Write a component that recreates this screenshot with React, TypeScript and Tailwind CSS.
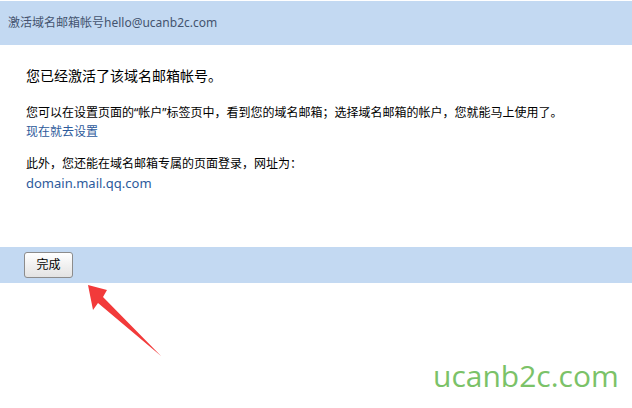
import React from "react";

const font = { fontFamily: "'Noto Sans', 'Noto Sans CJK SC', sans-serif" };

export default function App() {
  return (
    <div className="relative w-[632px] h-[408px] bg-white overflow-hidden" style={font}>
      {/* Header */}
      <div className="mt-px h-[44px] bg-[#c3d9f2] flex items-center pl-[8px] text-[12px] text-[#44546f]">
        激活域名邮箱帐号hello@ucanb2c.com
      </div>

      {/* Body */}
      <div className="pl-[26px] pt-[21px] h-[202px] text-black">
        <p className="text-[14px] leading-[20px]">您已经激活了该域名邮箱帐号。</p>
        <p className="mt-[17px] text-[12px] leading-[19px]">
          您可以在设置页面的“帐户”标签页中，看到您的域名邮箱；选择域名邮箱的帐户，您就能马上使用了。
        </p>
        <p className="text-[12px] leading-[19px] text-[#2d5a9b]">现在就去设置</p>
        <p className="mt-[14px] text-[12px] leading-[18px]">此外，您还能在域名邮箱专属的页面登录，网址为：</p>
        <p className="text-[13px] leading-[20px] text-[#2d5a9b]">domain.mail.qq.com</p>
      </div>

      {/* Footer bar */}
      <div className="h-[36px] bg-[#c3d9f2] flex items-center pl-[24px]">
        <button className="w-[49px] h-[26px] rounded-[3px] border border-[#8c8c8c] bg-gradient-to-b from-white to-[#e3e3e3] text-[12px] text-black">
          完成
        </button>
      </div>

      {/* Red annotation arrow */}
      <svg className="absolute left-0 top-0" width="632" height="408">
        <polygon
          points="88,285 107,290 103,297 161,356 98,303 93,310"
          fill="#f23a3a"
        />
      </svg>

      {/* Watermark */}
      <div
        className="absolute left-[433px] top-[356px] text-[30px] leading-[40px] text-[#7bc268]"
        style={{ fontFamily: "'Open Sans', sans-serif" }}
      >
        ucanb2c.com
      </div>
    </div>
  );
}
